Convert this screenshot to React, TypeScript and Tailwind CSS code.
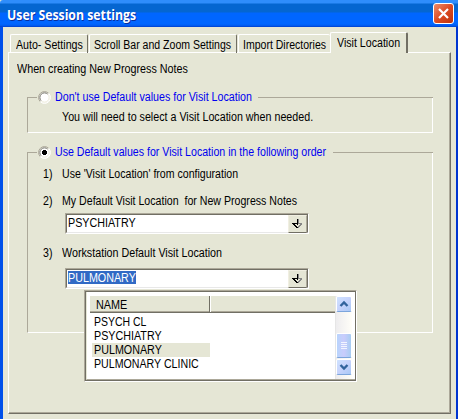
import type { ReactNode } from "react";

function Label({ children, className = "" }: { children: ReactNode; className?: string }) {
  return (
    <span className={`inline-block h-[14px] origin-left whitespace-pre leading-[14px] ${className || "scale-x-[0.886]"}`}>
      {children}
    </span>
  );
}

function Tab({ label, className, scale }: { label: string; className: string; scale: string }) {
  return (
    <div className={`shrink-0 rounded-t-[2px] border-t border-l border-t-white border-l-white ${className}`}>
      <Label className={scale}>{label}</Label>
    </div>
  );
}

function Radio({ checked = false }: { checked?: boolean }) {
  return (
    <svg width="13" height="13" viewBox="0 0 13 13" className="shrink-0">
      <circle cx="6.5" cy="6.5" r="5.5" fill="#fff" />
      <path d="M2.3 10.7A5.7 5.7 0 0 1 10.7 2.3" fill="none" stroke="#aca899" />
      <path d="M3.2 9.8A4.6 4.6 0 0 1 9.8 3.2" fill="none" stroke="#716f64" />
      <path d="M10.7 2.3A5.7 5.7 0 0 1 2.3 10.7" fill="none" stroke="#fff" />
      <path d="M9.8 3.2A4.6 4.6 0 0 1 3.2 9.8" fill="none" stroke="#ece9d8" />
      {checked && <path d="M5 4h3v1h1v3h-1v1h-3v-1h-1v-3h1z" fill="#000" shapeRendering="crispEdges" />}
    </svg>
  );
}

function GroupHeader({ label, checked, scale }: { label: string; checked?: boolean; scale: string }) {
  return (
    <div className="flex h-[13px] items-center">
      <div className="h-px w-[10px] bg-[#aca899]" />
      <div className="flex w-[18px] pl-[1px]">
        <Radio checked={checked} />
      </div>
      <div className={`-mt-px shrink-0 text-[#0000f0] ${checked ? "w-[278px]" : "w-[203px]"}`}>
        <Label className={scale}>{label}</Label>
      </div>
      <div className="h-px flex-1 bg-[#aca899]" />
    </div>
  );
}

function Item({ n, text, scale }: { n: string; text: string; scale: string }) {
  return (
    <div className="flex h-[14px] items-center">
      <div className="w-[19px]">
        <Label>{n}</Label>
      </div>
      <Label className={scale}>{text}</Label>
    </div>
  );
}

function Combo({ value, selected = false }: { value: string; selected?: boolean }) {
  return (
    <div className="ml-[22px] h-[21px] w-[244px] border border-t-[#aca899] border-r-white border-b-white border-l-[#aca899]">
      <div className="flex h-[19px] border border-t-[#716f64] border-r-[#716f64] border-b-[#e8e8e8] border-l-[#716f64] bg-white">
        <div className="flex-1 pt-[1px] pl-px">
          <div className={`flex h-[13px] w-[68px] ${selected ? "bg-[#316ac5] text-white" : ""}`}>
            <Label className="scale-x-[0.895] leading-[13px]">{value}</Label>
          </div>
        </div>
        <div className="h-[18px] w-[19px] border border-t-[#f1efe2] border-r-[#aca899] border-b-[#716f64] border-l-[#f1efe2] bg-[#e5e6d5]">
          <svg width="17" height="16" viewBox="0 0 17 16" shapeRendering="crispEdges">
            <path d="M8 3h1v6h-1zM3 7h5v1h-5zM4 8h2v1h-2zM5 9h2v1h-2zM6 10h2v1h-2zM7 11h2v1h-2z" fill="#000" />
            <path d="M9 3h1v4h-1zM9 7h4v1h-4zM11 8h2v1h-2zM10 9h2v1h-2zM9 10h2v1h-2zM9 11h1v1h-1z" fill="#858585" />
          </svg>
        </div>
      </div>
    </div>
  );
}

function ScrollButton({ down = false }: { down?: boolean }) {
  return (
    <div className="h-[16px] w-[16px] rounded-[2px] border border-white border-b-[#7ca5dc] bg-gradient-to-br from-[#cfe2ff] via-[#c6d3fc] to-[#a9c8f5]">
      <svg width="14" height="14" viewBox="0 0 14 14">
        <path d={down ? "M3.5 5L7 8.5L10.5 5" : "M3.5 9L7 5.5L10.5 9"} fill="none" stroke="#31639c" strokeWidth="2.4" />
      </svg>
    </div>
  );
}

const names: [string, string][] = [
  ["PSYCH CL", "scale-x-[0.872]"],
  ["PSYCHIATRY", "scale-x-[0.895]"],
  ["PULMONARY", "scale-x-[0.895]"],
  ["PULMONARY CLINIC", "scale-x-[0.886]"],
];

function NameList() {
  return (
    <div className="absolute top-[290px] left-[84px] h-[92px] w-[273px] border border-t-[#aca899] border-r-white border-b-white border-l-[#aca899]">
      <div className="h-[90px] border border-[#716f64] bg-white">
        <div className="flex h-[88px] border-b border-l border-b-[#aca899] border-l-[#e5e6d5] pt-[4px] pr-[3px] pl-[3px]">
          <div className="min-w-0 flex-1">
            <div className="flex h-[17px] border-b border-[#716f64]">
              <div className="flex h-[16px] w-[119px] items-center border-b border-b-[#aca899] bg-[#e5e6d5] pt-[2px] pl-[6px]">
                <Label className="scale-x-[0.9]">NAME</Label>
              </div>
              <div className="h-[16px] w-px bg-[#716f64]" />
              <div className="h-[16px] w-px bg-white" />
              <div className="h-[16px] flex-1 border-b border-b-[#aca899] bg-[#e5e6d5]" />
            </div>
            <div className="pt-[2px] pl-[2px]">
              {names.map(([name, scale]) => (
                <div key={name} className={`flex h-[14px] w-[118px] pl-[2px] ${name === "PULMONARY" ? "bg-[#e5e6d5]" : ""}`}>
                  <Label className={scale}>{name}</Label>
                </div>
              ))}
            </div>
          </div>
          <div className="flex w-[17px] flex-col border-l border-[#e6e6e6] bg-gradient-to-r from-[#eeedef] to-[#fffef8]">
            <ScrollButton />
            <div className="h-[21px]" />
            <div className="flex h-[25px] w-[16px] flex-col items-center justify-center gap-px rounded-[2px] border border-white border-b-[#7ca5dc] bg-gradient-to-r from-[#b8d4fc] via-[#c9ccfc] to-[#a7cdf2]">
              {[0, 1, 2, 3].map((i) => (
                <div key={i} className="h-px w-[6px] bg-[#f2f5ff]" />
              ))}
            </div>
            <div className="mt-px">
              <ScrollButton down />
            </div>
          </div>
        </div>
      </div>
    </div>
  );
}

export default function App() {
  return (
    <div className="relative flex h-[419px] w-[458px] flex-col overflow-hidden bg-[#e5e6d5] font-['Liberation_Sans',Arial,sans-serif] text-[12px] text-black">
      <header className="flex h-[27px] shrink-0 justify-between rounded-tl-[3px] border-b border-[#0048d8] bg-[linear-gradient(#2f8dfb_0px,#2f8dfb_3px,#0566d0_4px,#0566d0_12px,#0066ff_13px,#0066ff_24px,#0050e0_27px)] pt-[3px] pr-[4px] pl-[7px]">
        <h1 className="h-[20px] origin-left scale-x-[0.877] font-['Open_Sans',sans-serif] text-[14px] leading-[23px] font-bold whitespace-nowrap text-white [text-shadow:1px_1px_0_#0a2f9c]">
          User Session settings
        </h1>
        <div className="h-[21px] w-[21px] rounded-[3px] border border-white bg-gradient-to-br from-[#ec8a68] via-[#dc4b22] to-[#bd3208]">
          <svg width="19" height="19" viewBox="0 0 19 19">
            <path d="M5 5L14 14M14 5L5 14" stroke="#fff" strokeWidth="2.2" />
          </svg>
        </div>
      </header>
      <div className="flex-1 border-r-2 border-l-[3px] border-r-[#0035d0] border-l-[#0050ea] pt-[5px] pl-[5px]">
        <div className="relative z-10 -mb-px flex h-[21px] items-end pl-[2px]">
          <Tab label="Auto- Settings" className="h-[19px] w-[78px] border-r border-r-[#716f64] pt-px pl-[5px]" scale="scale-x-[0.886]" />
          <Tab label="Scroll Bar and Zoom Settings" className="ml-px h-[19px] w-[148px] border-r border-r-[#716f64] pt-px pl-[4px]" scale="scale-x-[0.878]" />
          <Tab label="Import Directories" className="ml-px h-[19px] w-[92px] pt-px pl-[4px]" scale="scale-x-[0.877]" />
          <Tab label="Visit Location" className="h-[21px] w-[78px] border-r-2 border-r-[#716f64] bg-[#e5e6d5] pt-px pl-[6px]" scale="scale-x-[0.886]" />
        </div>
        <div className="h-[362px] w-[443px] border border-t-white border-r-[#716f64] border-b-[#716f64] border-l-white">
          <div className="h-[360px] border-r border-b border-[#aca899]">
            <div className="h-[38px] pt-[7px] pl-[8px]">
              <Label className="scale-x-[0.896]">When creating New Progress Notes</Label>
            </div>
            <section className="ml-[18px] w-[406px]">
              <GroupHeader label="Don't use Default values for Visit Location" scale="scale-x-[0.889]" />
              <div className="-mt-[6px] h-[35px] border border-t-0 border-r-white border-b-white border-l-[#aca899] pt-[10px] pl-[34px]">
                <Label className="scale-x-[0.892]">You will need to select a Visit Location when needed.</Label>
              </div>
            </section>
            <section className="mt-[13px] ml-[18px] w-[406px]">
              <GroupHeader checked label="Use Default values for Visit Location in the following order" scale="scale-x-[0.884]" />
              <div className="-mt-[6px] h-[180px] border border-t-0 border-r-white border-b-white border-l-[#aca899] pt-[14px] pl-[15px]">
                <Item n="1)" text="Use 'Visit Location' from configuration" scale="scale-x-[0.881]" />
                <div className="h-[13px]" />
                <Item n="2)" text="My Default Visit Location  for New Progress Notes" scale="scale-x-[0.884]" />
                <div className="h-[5px]" />
                <Combo value="PSYCHIATRY" />
                <div className="h-[12px]" />
                <Item n="3)" text="Workstation Default Visit Location" scale="scale-x-[0.894]" />
                <div className="h-[8px]" />
                <Combo value="PULMONARY" selected />
              </div>
            </section>
          </div>
        </div>
      </div>
      <NameList />
    </div>
  );
}
